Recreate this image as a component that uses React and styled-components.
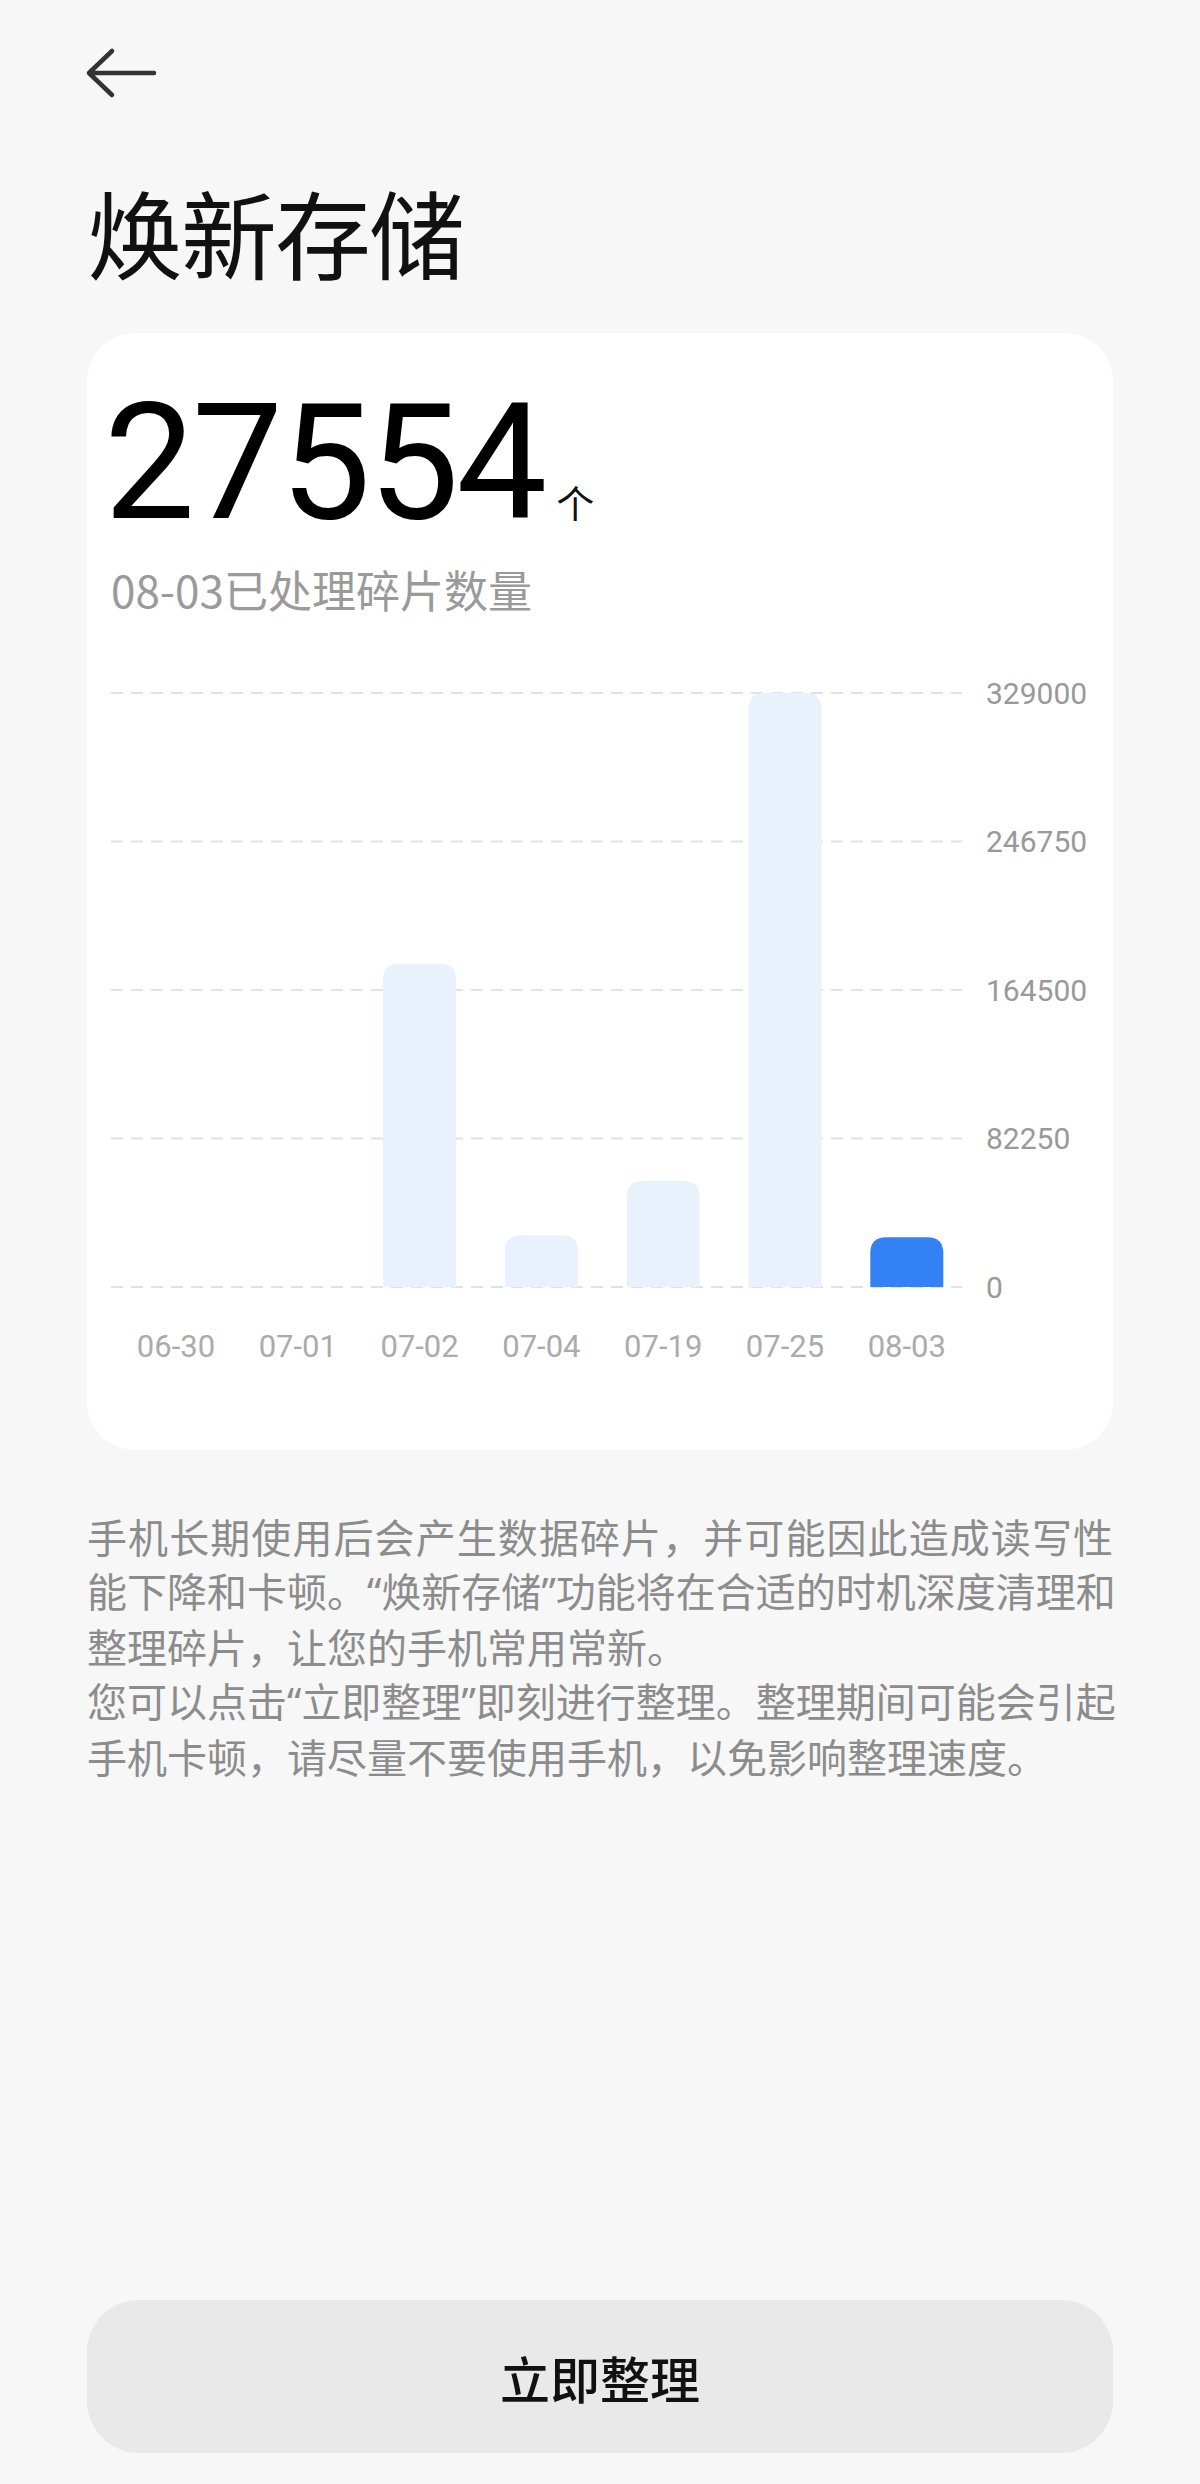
import React from 'react';
import styled, { createGlobalStyle } from 'styled-components';

const GlobalStyle = createGlobalStyle`
  html, body {
    margin: 0;
    padding: 0;
    background: #f7f7f7;
  }
  body {
    font-family: "Noto Sans CJK SC", "Noto Sans", sans-serif;
    -webkit-font-smoothing: antialiased;
  }
  * {
    box-sizing: border-box;
  }
`;

const Page = styled.div`
  width: 1200px;
  height: 2484px;
  padding: 0 87px 31px;
  display: flex;
  flex-direction: column;
  background: #f7f7f7;
`;

const TopBar = styled.div`
  height: 150px;
  padding-top: 47px;
  margin-left: -2px;
`;

const BackButton = styled.button`
  display: block;
  padding: 0;
  border: 0;
  background: none;
  width: 72px;
  height: 52px;
  cursor: pointer;
  svg {
    display: block;
  }
`;

const Title = styled.h1`
  margin: 33px 0 0;
  font-size: 96px;
  line-height: 96px;
  font-weight: 400;
  color: #111;
  letter-spacing: -2px;
`;

const Card = styled.section`
  margin-top: 54px;
  background: #fff;
  border-radius: 48px;
  padding: 49px 24px 70px;
`;

const CountRow = styled.div`
  display: flex;
  align-items: baseline;
  margin-left: -7px;
`;

const Count = styled.span`
  font-family: Roboto, "Noto Sans", sans-serif;
  font-size: 162px;
  line-height: 162px;
  font-weight: 400;
  color: #000;
  letter-spacing: -3px;
`;

const Unit = styled.span`
  margin-left: 12px;
  font-size: 38px;
  line-height: 38px;
  color: #111;
`;

const Caption = styled.div`
  margin-top: 23px;
  font-size: 44px;
  line-height: 44px;
  color: #9a9a9a;
`;

const ChartSvg = styled.svg`
  display: block;
  margin-top: 49px;
  overflow: visible;
  text {
    font-family: Roboto, "Noto Sans", sans-serif;
  }
`;

const Description = styled.div`
  margin-top: 59px;
  font-size: 40px;
  line-height: 54px;
  color: #8c8c8c;
`;

const Line = styled.span`
  display: block;
  white-space: nowrap;
  text-align: ${({ $full }) => ($full ? 'justify' : 'left')};
  text-align-last: ${({ $full }) => ($full ? 'justify' : 'left')};
`;

const Quote = styled.span`
  font-family: "Noto Sans", "Liberation Sans", sans-serif;
`;

const ActionButton = styled.button`
  margin-top: auto;
  height: 153px;
  width: 100%;
  border: 0;
  border-radius: 52px;
  background: #e9e9e9;
  font-family: "Noto Sans CJK SC", sans-serif;
  font-size: 50px;
  font-weight: 500;
  color: #111;
  cursor: pointer;
`;

const bars = [
  { label: '06-30', value: 0 },
  { label: '07-01', value: 0 },
  { label: '07-02', value: 179000 },
  { label: '07-04', value: 28600 },
  { label: '07-19', value: 58700 },
  { label: '07-25', value: 329000 },
  { label: '08-03', value: 27554, active: true },
];

const ticks = [329000, 246750, 164500, 82250, 0];

const CHART_W = 978;
const CHART_H = 720;
const TOP = 33;
const BASE = 627;
const GRID_RIGHT = 851;
const BAR_W = 73;
const FIRST_X = 65;
const STEP = 121.8;

function barPath(x, y, w, h, r) {
  const rr = Math.min(r, h, w / 2);
  return `M${x},${y + h} V${y + rr} Q${x},${y} ${x + rr},${y} H${x + w - rr} Q${x + w},${y} ${x + w},${y + rr} V${y + h} Z`;
}

function Chart() {
  const max = ticks[0];
  const span = BASE - TOP;
  return (
    <ChartSvg width={CHART_W} height={CHART_H} viewBox={`0 0 ${CHART_W} ${CHART_H}`}>
      {ticks.map((t, i) => {
        const y = TOP + (span / (ticks.length - 1)) * i;
        return (
          <g key={t}>
            <line x1="0" y1={y} x2={GRID_RIGHT} y2={y} stroke="#e2e2e2" strokeWidth="2" strokeDasharray="12 8" />
            <text x="875" y={y} dominantBaseline="central" fontSize="30" fill="#999">
              {t}
            </text>
          </g>
        );
      })}
      {bars.map((b, i) => {
        const cx = FIRST_X + STEP * i;
        const h = (b.value / max) * span;
        return (
          <g key={b.label}>
            {h > 0 && (
              <path d={barPath(cx - BAR_W / 2, BASE - h, BAR_W, h, 16)} fill={b.active ? '#3381f5' : '#e9f1fd'} />
            )}
            <text x={cx} y="686" textAnchor="middle" dominantBaseline="central" fontSize="31" fill="#ababab">
              {b.label}
            </text>
          </g>
        );
      })}
    </ChartSvg>
  );
}

export default function App() {
  return (
    <>
      <GlobalStyle />
      <Page>
        <TopBar>
          <BackButton aria-label="返回">
            <svg width="72" height="52" viewBox="0 0 72 52" fill="none">
              <path d="M4 26 H69 M27 4 L4 26 L27 48" stroke="#333" strokeWidth="4.5" strokeLinecap="round" strokeLinejoin="round" />
            </svg>
          </BackButton>
        </TopBar>

        <Title>焕新存储</Title>

        <Card>
          <CountRow>
            <Count>27554</Count>
            <Unit>个</Unit>
          </CountRow>
          <Caption>08-03已处理碎片数量</Caption>
          <Chart />
        </Card>

        <Description>
          <Line $full>手机长期使用后会产生数据碎片，并可能因此造成读写性</Line>
          <Line $full>
            能下降和卡顿。<Quote>“</Quote>焕新存储<Quote>”</Quote>功能将在合适的时机深度清理和
          </Line>
          <Line>整理碎片，让您的手机常用常新。</Line>
          <Line $full>
            您可以点击<Quote>“</Quote>立即整理<Quote>”</Quote>即刻进行整理。整理期间可能会引起
          </Line>
          <Line>手机卡顿，请尽量不要使用手机，以免影响整理速度。</Line>
        </Description>

        <ActionButton>立即整理</ActionButton>
      </Page>
    </>
  );
}
